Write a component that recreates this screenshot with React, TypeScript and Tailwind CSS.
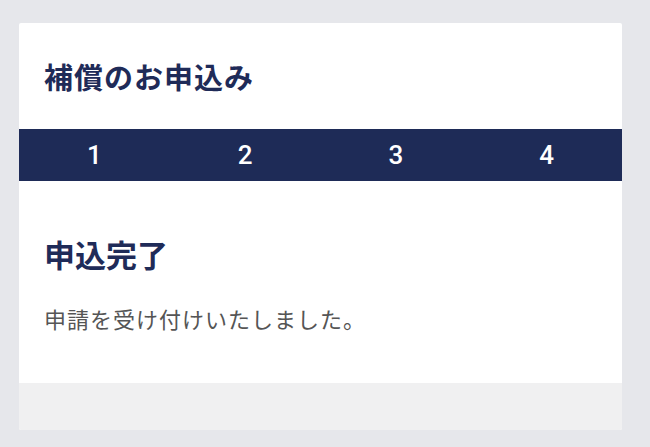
import React from 'react';

const steps = ['1', '2', '3', '4'];

const App: React.FC = () => {
  return (
    <div
      className="min-h-[447px] bg-[#e6e7eb] pt-[23px] pl-[19px] pr-[28px]"
      style={{ fontFamily: '"Noto Sans CJK JP", "Noto Sans", sans-serif' }}
    >
      <div className="bg-white w-[603px] rounded-[2px] overflow-hidden">
        <div className="h-[106px] flex items-center px-[25px]">
          <h1 className="text-[29px] leading-[40px] font-bold text-[#1f2b58] tracking-[1px]">補償のお申込み</h1>
        </div>
        <div className="h-[52px] bg-[#1e2b57] grid grid-cols-4">
          {steps.map((s) => (
            <div
              key={s}
              className="flex items-center justify-center text-white text-[26px] font-medium"
              style={{ fontFamily: 'Roboto, "Noto Sans", sans-serif' }}
            >
              {s}
            </div>
          ))}
        </div>
        <div className="px-[25px] pt-[53px] pb-[50px]">
          <h2 className="text-[31px] leading-[40px] font-bold text-[#1f2b58]">申込完了</h2>
          <p className="mt-[29px] text-[22px] leading-[30px] text-[#555555] tracking-[1px]">
            申請を受け付けいたしました。
          </p>
        </div>
        <div className="h-[47px] bg-[#f0f0f1]" />
      </div>
    </div>
  );
};

export default App;
